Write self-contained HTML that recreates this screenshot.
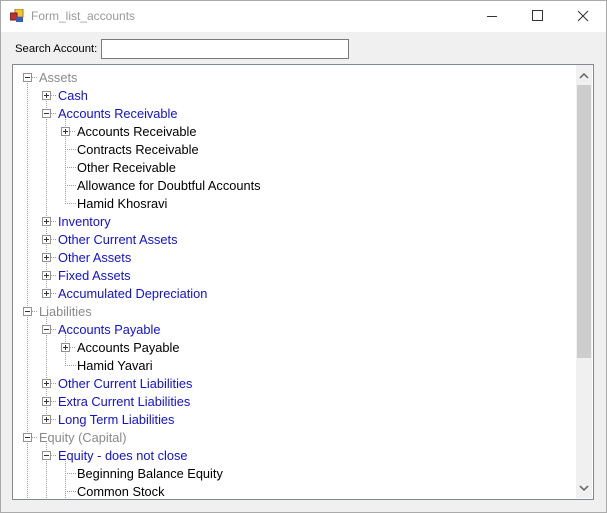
<!DOCTYPE html>
<html><head><style>
body{margin:0;width:607px;height:513px;overflow:hidden;background:#f0f0f0;font-family:"Segoe UI","Liberation Sans",sans-serif;position:relative}
.win{position:absolute;left:0;top:0;width:605px;height:511px;border:1px solid #aaa;background:#f0f0f0}
.title{position:absolute;left:0;top:0;width:605px;height:31px;background:#fff}
.t{position:absolute;font-size:12.8px;white-space:nowrap;line-height:18px;height:18px;margin-top:1px}
.g{color:#8a8a8a}.b{color:#1010d8}.k{color:#000}
.bx{position:absolute;width:7px;height:7px;border:1px solid #929292;background:#fff}
.bx:before{content:"";position:absolute;left:1px;top:3px;width:5px;height:1px;background:#333}
.p:after{content:"";position:absolute;left:3px;top:1px;width:1px;height:5px;background:#333}
</style></head><body>
<div class="win">
<div class="title">
<svg style="position:absolute;left:9px;top:8px" width="14" height="14"><rect x="5" y="0" width="8" height="8" fill="#f4c430" stroke="#a08020"/><rect x="0" y="4" width="7" height="7" fill="#c03030" stroke="#702020"/><rect x="6" y="8" width="7" height="5" fill="#3060c0"/></svg>
<div style="position:absolute;left:30px;top:8px;font-size:12px;color:#999">Form_list_accounts</div>
<div style="position:absolute;left:486px;top:15px;width:10px;height:1px;background:#333"></div>
<div style="position:absolute;left:531px;top:9px;width:9px;height:9px;border:1px solid #333"></div>
<svg style="position:absolute;left:576px;top:9px" width="12" height="12"><path d="M1 1L11 11M11 1L1 11" stroke="#333" stroke-width="1"/></svg>
</div>
</div>
<div style="position:absolute;left:15px;top:43px;font-size:11.3px;color:#000">Search Account:</div>
<div style="position:absolute;left:101px;top:39px;width:246px;height:18px;border:1px solid #7a7a7a;background:#fff"></div>
<div style="position:absolute;left:12px;top:64px;width:580px;height:434px;border:1px solid #828790;background:#fff;overflow:hidden"></div>
<div style="position:absolute;left:576px;top:65px;width:16px;height:433px;background:#f0f0f0"></div>
<div style="position:absolute;left:577px;top:85px;width:14px;height:273px;background:#cdcdcd"></div>
<svg style="position:absolute;left:576px;top:65px" width="16" height="433"><path d="M4 13L8 9L12 13" stroke="#606060" stroke-width="1.5" fill="none"/><path d="M4 421L8 425L12 421" stroke="#606060" stroke-width="1.5" fill="none"/></svg>
<svg style="position:absolute;left:0;top:0" width="575" height="498">
<g stroke="#a0a0a0" stroke-dasharray="1 1" stroke-width="1">
<path d="M27.5 81V498M46.5 99V293M65.5 117V203M46.5 315V419M65.5 333V365M46.5 441V498M65.5 459V498"/>
<path d="M32 77.5H38M51 95.5H57M51 113.5H57M70 131.5H76M65 149.5H76M65 167.5H76M65 185.5H76M65 203.5H76M51 221.5H57M51 239.5H57M51 257.5H57M51 275.5H57M51 293.5H57M32 311.5H38M51 329.5H57M70 347.5H76M65 365.5H76M51 383.5H57M51 401.5H57M51 419.5H57M32 437.5H38M51 455.5H57M65 473.5H76M65 491.5H76"/>
</g></svg>
<div class="bx" style="left:23px;top:73px"></div>
<div class="bx p" style="left:42px;top:91px"></div>
<div class="bx" style="left:42px;top:109px"></div>
<div class="bx p" style="left:61px;top:127px"></div>
<div class="bx p" style="left:42px;top:217px"></div>
<div class="bx p" style="left:42px;top:235px"></div>
<div class="bx p" style="left:42px;top:253px"></div>
<div class="bx p" style="left:42px;top:271px"></div>
<div class="bx p" style="left:42px;top:289px"></div>
<div class="bx" style="left:23px;top:307px"></div>
<div class="bx" style="left:42px;top:325px"></div>
<div class="bx p" style="left:61px;top:343px"></div>
<div class="bx p" style="left:42px;top:379px"></div>
<div class="bx p" style="left:42px;top:397px"></div>
<div class="bx p" style="left:42px;top:415px"></div>
<div class="bx" style="left:23px;top:433px"></div>
<div class="bx" style="left:42px;top:451px"></div>
<div class="t g" style="left:39px;top:68px">Assets</div>
<div class="t b" style="left:58px;top:86px">Cash</div>
<div class="t b" style="left:58px;top:104px">Accounts Receivable</div>
<div class="t k" style="left:77px;top:122px">Accounts Receivable</div>
<div class="t k" style="left:77px;top:140px">Contracts Receivable</div>
<div class="t k" style="left:77px;top:158px">Other Receivable</div>
<div class="t k" style="left:77px;top:176px">Allowance for Doubtful Accounts</div>
<div class="t k" style="left:77px;top:194px">Hamid Khosravi</div>
<div class="t b" style="left:58px;top:212px">Inventory</div>
<div class="t b" style="left:58px;top:230px">Other Current Assets</div>
<div class="t b" style="left:58px;top:248px">Other Assets</div>
<div class="t b" style="left:58px;top:266px">Fixed Assets</div>
<div class="t b" style="left:58px;top:284px">Accumulated Depreciation</div>
<div class="t g" style="left:39px;top:302px">Liabilities</div>
<div class="t b" style="left:58px;top:320px">Accounts Payable</div>
<div class="t k" style="left:77px;top:338px">Accounts Payable</div>
<div class="t k" style="left:77px;top:356px">Hamid Yavari</div>
<div class="t b" style="left:58px;top:374px">Other Current Liabilities</div>
<div class="t b" style="left:58px;top:392px">Extra Current Liabilities</div>
<div class="t b" style="left:58px;top:410px">Long Term Liabilities</div>
<div class="t g" style="left:39px;top:428px">Equity (Capital)</div>
<div class="t b" style="left:58px;top:446px">Equity - does not close</div>
<div class="t k" style="left:77px;top:464px">Beginning Balance Equity</div>
<div class="t k" style="left:77px;top:482px">Common Stock</div>
</body></html>
